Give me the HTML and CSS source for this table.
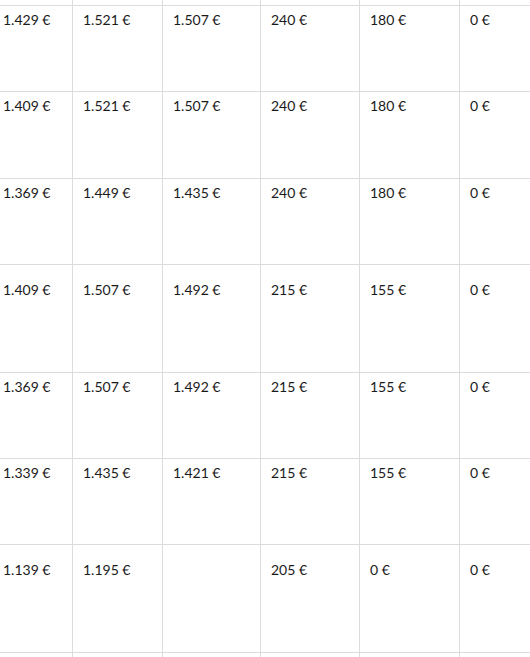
FILE: index.html
```html
<!DOCTYPE html>
<html>
<head>
<meta charset="utf-8">
<link rel="stylesheet" href="styles.css">
</head>
<body>
<div class="viewport">
  <div class="grid">
    <div class="cell top"></div><div class="cell top"></div><div class="cell top"></div><div class="cell top"></div><div class="cell top"></div><div class="cell top"></div>

    <div class="cell r86">1.429 €</div><div class="cell r86">1.521 €</div><div class="cell r86">1.507 €</div><div class="cell r86">240 €</div><div class="cell r86">180 €</div><div class="cell r86">0 €</div>

    <div class="cell r87">1.409 €</div><div class="cell r87">1.521 €</div><div class="cell r87">1.507 €</div><div class="cell r87">240 €</div><div class="cell r87">180 €</div><div class="cell r87">0 €</div>

    <div class="cell r86">1.369 €</div><div class="cell r86">1.449 €</div><div class="cell r86">1.435 €</div><div class="cell r86">240 €</div><div class="cell r86">180 €</div><div class="cell r86">0 €</div>

    <div class="cell tall">1.409 €</div><div class="cell tall">1.507 €</div><div class="cell tall">1.492 €</div><div class="cell tall">215 €</div><div class="cell tall">155 €</div><div class="cell tall">0 €</div>

    <div class="cell r86">1.369 €</div><div class="cell r86">1.507 €</div><div class="cell r86">1.492 €</div><div class="cell r86">215 €</div><div class="cell r86">155 €</div><div class="cell r86">0 €</div>

    <div class="cell r86">1.339 €</div><div class="cell r86">1.435 €</div><div class="cell r86">1.421 €</div><div class="cell r86">215 €</div><div class="cell r86">155 €</div><div class="cell r86">0 €</div>

    <div class="cell tall">1.139 €</div><div class="cell tall">1.195 €</div><div class="cell tall"></div><div class="cell tall">205 €</div><div class="cell tall">0 €</div><div class="cell tall">0 €</div>

    <div class="cell r86"></div><div class="cell r86"></div><div class="cell r86"></div><div class="cell r86"></div><div class="cell r86"></div><div class="cell r86"></div>
  </div>
</div>
</body>
</html>
```
FILE: styles.css
```css
html, body {
  margin: 0;
  padding: 0;
  background: #ffffff;
}
.viewport {
  width: 530px;
  height: 657px;
  overflow: hidden;
}
.grid {
  display: grid;
  grid-template-columns: 80px 90px 98px 99px 100px 100px;
  margin-left: -7px;
  margin-top: -80px;
  width: 567px;
  font-family: Lato, "Noto Sans", sans-serif;
  font-size: 14px;
  line-height: 20px;
  color: #1a1a1a;
}
.cell {
  box-sizing: border-box;
  border-right: 1px solid #dcdcdc;
  border-bottom: 1px solid #dcdcdc;
  padding: 4px 10px 0 10px;
  white-space: nowrap;
}
.top { height: 86px; }
.r86 { height: 86px; }
.r87 { height: 87px; }
.tall { height: 108px; padding-top: 15px; }
```
